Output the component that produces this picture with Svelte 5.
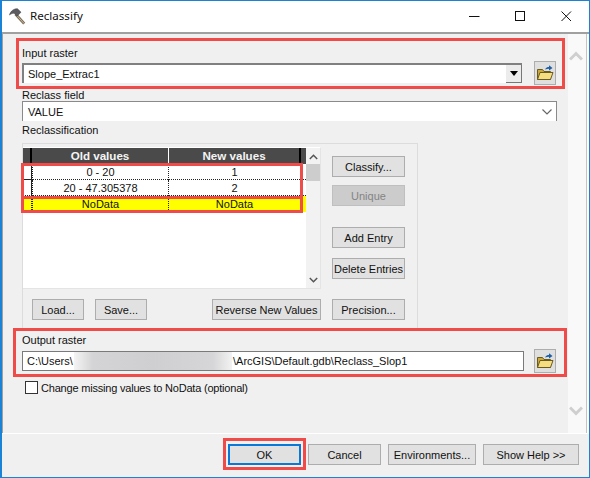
<script>
  const rows = [
    { old: '0 - 20', now: '1', cls: '' },
    { old: '20 - 47.305378', now: '2', cls: '' },
    { old: 'NoData', now: 'NoData', cls: 'nodata' }
  ];
</script>

{#snippet folder()}
  <button class="folder" type="button" aria-label="Browse">
    <svg width="18" height="16" viewBox="0 0 18 16">
      <path d="M1.5 4.5V14.5H14.5V6.5H8L6.5 4.5Z" fill="#c9a93e" stroke="#6b5a1c" stroke-width="1" />
      <path d="M1.5 14.5L4 7.5H17L14.5 14.5Z" fill="#f5dd82" stroke="#6b5a1c" stroke-width="1" />
      <path d="M9 4.5C10 2.5 11.5 2 13 2V0.3L16.5 3L13 5.5V3.8C11.5 3.8 10.5 4 9 4.5Z" fill="#1c5fa8" />
    </svg>
  </button>
{/snippet}

<div class="window">
  <header class="titlebar">
    <svg class="hammer" width="17" height="17" viewBox="0 0 17 17">
      <path d="M6.5 6L15.2 15.6" stroke="#7d6f58" stroke-width="2.8" />
      <path d="M6.5 6L15.2 15.6" stroke="#cbbda6" stroke-width="0.9" />
      <path d="M0.5 7C1.5 3 5 0.5 8.5 0.8L12 4.2L8 8.2L5.5 5.5C4 5 2 5.6 0.5 7Z" fill="#5c5c60" stroke="#37373a" stroke-width="0.5" />
    </svg>
    <span class="title">Reclassify</span>
    <div class="controls">
      <svg width="11" height="11" viewBox="0 0 11 11"><path d="M0 5.5H10.5" stroke="#111" /></svg>
      <svg width="11" height="11" viewBox="0 0 11 11"><rect x="0.5" y="0.5" width="9" height="9" fill="none" stroke="#111" /></svg>
      <svg width="11" height="11" viewBox="0 0 11 11"><path d="M0.5 0.5L10 10M10 0.5L0.5 10" stroke="#111" /></svg>
    </div>
  </header>

  <div class="body">
    <main class="pane">
      <section class="red input-section">
        <div class="label">Input raster</div>
        <div class="field-row">
          <div class="combo-sunken">
            <span>Slope_Extrac1</span>
            <span class="drop"><i></i></span>
          </div>
          {@render folder()}
        </div>
      </section>

      <div class="label reclass-label">Reclass field</div>
      <div class="combo-flat">
        <span>VALUE</span>
        <svg width="10" height="6" viewBox="0 0 10 6"><path d="M0.5 0.5L5 5L9.5 0.5" fill="none" stroke="#666" stroke-width="1.2" /></svg>
      </div>

      <div class="label class-label">Reclassification</div>
      <div class="group">
        <div class="group-top">
          <div class="table-frame">
            <div class="table">
              <div class="row head">
                <div class="sel"></div>
                <div class="cell">Old values</div>
                <div class="cell">New values</div>
              </div>
              {#each rows as r, i}
                <div class="row {r.cls}">
                  <div class="sel s{i}"></div>
                  <div class="cell">{r.old}</div>
                  <div class="cell">{r.now}</div>
                </div>
              {/each}
              <div class="hl hl-a"></div>
              <div class="hl hl-b"></div>
            </div>
            <div class="vscroll">
              <svg class="arrow" width="9" height="6" viewBox="0 0 9 6"><path d="M0.8 5L4.5 1.3L8.2 5" fill="none" stroke="#555" stroke-width="1.5" /></svg>
              <div class="thumb"></div>
              <svg class="arrow down" width="9" height="6" viewBox="0 0 9 6"><path d="M0.8 1L4.5 4.7L8.2 1" fill="none" stroke="#555" stroke-width="1.5" /></svg>
            </div>
          </div>
          <div class="side">
            <button class="btn wide" type="button">Classify...</button>
            <button class="btn wide off" type="button">Unique</button>
            <button class="btn wide add" type="button">Add Entry</button>
            <button class="btn wide" type="button">Delete Entries</button>
          </div>
        </div>
        <div class="group-bottom">
          <button class="btn small" type="button">Load...</button>
          <button class="btn small" type="button">Save...</button>
          <button class="btn reverse" type="button">Reverse New Values</button>
          <button class="btn wide" type="button">Precision...</button>
        </div>
      </div>

      <section class="red output-section">
        <div class="label">Output raster</div>
        <div class="field-row">
          <div class="text-input">
            <span class="prefix">C:\Users\</span><span class="blot"></span><span>\ArcGIS\Default.gdb\Reclass_Slop1</span>
          </div>
          {@render folder()}
        </div>
      </section>

      <label class="check">
        <span class="box"></span>
        <span class="check-text">Change missing values to NoData (optional)</span>
      </label>
    </main>
    <aside class="pane-scroll">
      <svg width="14" height="10" viewBox="0 0 14 10"><path d="M1 8.5L7 2.5L13 8.5" fill="none" stroke="#cfcfcf" stroke-width="3" /></svg>
      <svg width="14" height="10" viewBox="0 0 14 10"><path d="M1 1.5L7 7.5L13 1.5" fill="none" stroke="#cfcfcf" stroke-width="3" /></svg>
    </aside>
  </div>

  <footer class="footer">
    <div class="ok-wrap"><button class="btn ok" type="button">OK</button></div>
    <button class="btn cancel" type="button">Cancel</button>
    <button class="btn env" type="button">Environments...</button>
    <button class="btn help" type="button">Show Help &gt;&gt;</button>
  </footer>
</div>

<style>
  :global(body) { margin: 0; background: #fff; }
  * { box-sizing: border-box; }
  .window {
    width: 590px; height: 478px; overflow: hidden;
    display: flex; flex-direction: column;
    background: #fff; color: #111;
    border: 1px solid #1b83d6; border-left-width: 2px;
    font: 11px/14px "Liberation Sans", Arial, sans-serif;
  }
  .titlebar { height: 31px; flex: none; display: flex; align-items: center; position: relative; }
  .hammer { margin-left: 7px; margin-top: -1px; }
  .title { margin-left: 4px; font: 11.6px/14px "Noto Sans", sans-serif; margin-top: -1px; }
  .controls { margin-left: auto; display: flex; gap: 35px; margin-right: 17px; margin-top: -1px; }
  .controls svg { display: block; }

  .body { height: 401px; flex: none; display: flex; border-top: 2px solid #a0a0a0; border-left: 1px solid #a0a0a0; }
  .pane { width: 565px; flex: none; background: #f0f0f0; padding-top: 4px; padding-left: 13px; }
  .pane-scroll {
    flex: 1; background: #f9f9f9; border-right: 1px solid #c4c4c4;
    display: flex; flex-direction: column; justify-content: space-between; align-items: center;
    padding: 17px 3px 17px 0; margin-right: 2px;
  }

  .label { height: 16px; line-height: 16px; white-space: nowrap; }
  .red { border: 3px solid #ef4b49; }
  .input-section { width: 549px; height: 51px; padding: 4px 0 0 3px; }
  .field-row { display: flex; align-items: center; }
  .combo-sunken {
    width: 500px; height: 20px; display: flex; align-items: center; justify-content: space-between;
    background: #fff; padding-left: 4px;
    border-top: 2px solid #808080; border-left: 2px solid #808080;
  }
  .drop {
    width: 16px; height: 18px; background: #ececec; display: flex; align-items: center; justify-content: center;
    border-right: 1px solid #777; border-bottom: 1px solid #777;
  }
  .drop i { width: 0; height: 0; border: 4px solid transparent; border-top: 5px solid #000; border-bottom: 0; }
  .folder {
    width: 22px; height: 24px; margin-left: 12px; padding: 0;
    background: #dfdfdf; border: 1px solid #adadad;
    display: flex; align-items: center; justify-content: center;
  }
  .reclass-label { margin-left: 6px; height: 12px; line-height: 12px; margin-top: 0; }
  .combo-flat {
    margin-left: 6px; width: 535px; height: 20px; background: #fff;
    border: 1px solid #8a8a8a; border-bottom: 0;
    display: flex; align-items: center; justify-content: space-between;
    padding: 0 4px 0 5px;
  }
  .class-label { margin-left: 6px; height: 22px; line-height: 18px; }
  .group { margin-left: 6px; width: 396px; height: 185px; border: 1px solid #dcdcdc; border-bottom: 0; padding-top: 3px; }
  .group-top { display: flex; height: 142px; }
  .table-frame { width: 298px; height: 142px; display: flex; background: #fff; border: 1px solid #e4e4e4; border-left: 0; border-top-color: #fff; }
  .table { width: 283px; position: relative; }
  .row { display: grid; grid-template-columns: 9px 136px 133px 5px; height: 16px; text-align: center; line-height: 16px; }
  .cell { white-space: nowrap; border-left: 1px dotted #222; }
  .row .cell:last-of-type { border-right: 1px dotted #222; }
  .row:not(.head) { border-bottom: 1px dotted #222; }
  .sel { border-right: 1px solid #222; }
  .s0 { border-bottom: 1px solid #222; }
  .nodata .sel { border-right: 1px dotted #222; background: #ff0; }
  .nodata { background: #ff0; border-bottom: 0 !important; }
  .nodata .cell { background: #ff0; }
  .head { background: #4a4a4a; color: #f4f4f4; font-weight: 700; font-size: 11.6px; }
  .head .sel { border-right: 2px solid #000; }
  .head .cell { border-left: 0; }
  .head .cell:last-of-type { border-left: 1px solid #fff; border-right: 2px solid #000; }
  .hl { position: absolute; left: -2px; width: 282px; border: 3px solid #ef4b49; pointer-events: none; }
  .hl-a { top: 15px; height: 36px; }
  .hl-b { top: 48px; height: 17px; }
  .vscroll { width: 15px; background: #f2f2f2; position: relative; }
  .arrow { position: absolute; left: 3px; top: 6px; }
  .arrow.down { top: auto; bottom: 5px; }
  .thumb { position: absolute; left: 0; right: 0; top: 16px; height: 17px; background: #cdcdcd; }
  .side { margin-left: 11px; padding-top: 9px; display: flex; flex-direction: column; }
  .btn {
    height: 21px; padding: 0; background: #e1e1e1; border: 1px solid #adadad;
    font: inherit; color: #111; white-space: nowrap;
  }
  .wide { width: 73px; }
  .side .btn + .btn { margin-top: 10px; }
  .side .off { margin-top: 8px !important; }
  .side .add { margin-top: 21px !important; }
  .off { background: #cccccc; color: #848484; border-color: #bfbfbf; }
  .group-bottom { display: flex; margin-top: 10px; }
  .small { width: 52px; }
  .group-bottom .small:first-child { margin-left: 9px; margin-right: 11px; }
  .reverse { width: 109px; margin-left: 65px; margin-right: 11px; }
  .output-section { width: 554px; height: 49px; margin-left: -3px; padding: 0 0 0 6px; }
  .output-section .label { height: 18px; line-height: 18px; }
  .text-input {
    width: 502px; height: 20px; background: #fff; border: 1px solid #7a7a7a;
    display: flex; align-items: center; padding-left: 4px; white-space: nowrap;
  }
  .prefix { width: 47px; flex: none; }
  .blot { width: 158px; height: 18px; flex: none; background: linear-gradient(90deg, #f4f4f4 0%, #d4d4d6 12%, #cfcfd1 50%, #d6d6d8 88%, #f2f2f2 100%); margin-right: 1px; }
  .output-section .folder { margin-left: 10px; }
  .check { display: flex; align-items: center; margin: 3px 0 0 9px; height: 15px; }
  .check-text { letter-spacing: -0.2px; }
  .box { width: 13px; height: 13px; background: #fff; border: 1px solid #333; margin-right: 3px; }

  .footer {
    flex: 1; border-top: 1px solid #fff; background: #f0f0f0;
    display: flex; padding: 10px 0 0 226px; gap: 0;
    align-items: flex-start;
  }
  .ok-wrap { position: relative; margin-right: 7px; }
  .ok-wrap::after { content: ""; box-sizing: border-box; position: absolute; left: -5px; top: -6px; width: 83px; height: 32px; border: 3px solid #ef4b49; }
  .ok { width: 73px; border: 2px solid #0a78d6; }
  .cancel { width: 73px; margin-right: 7px; }
  .env { width: 88px; margin-right: 7px; }
  .help { width: 96px; }
</style>
